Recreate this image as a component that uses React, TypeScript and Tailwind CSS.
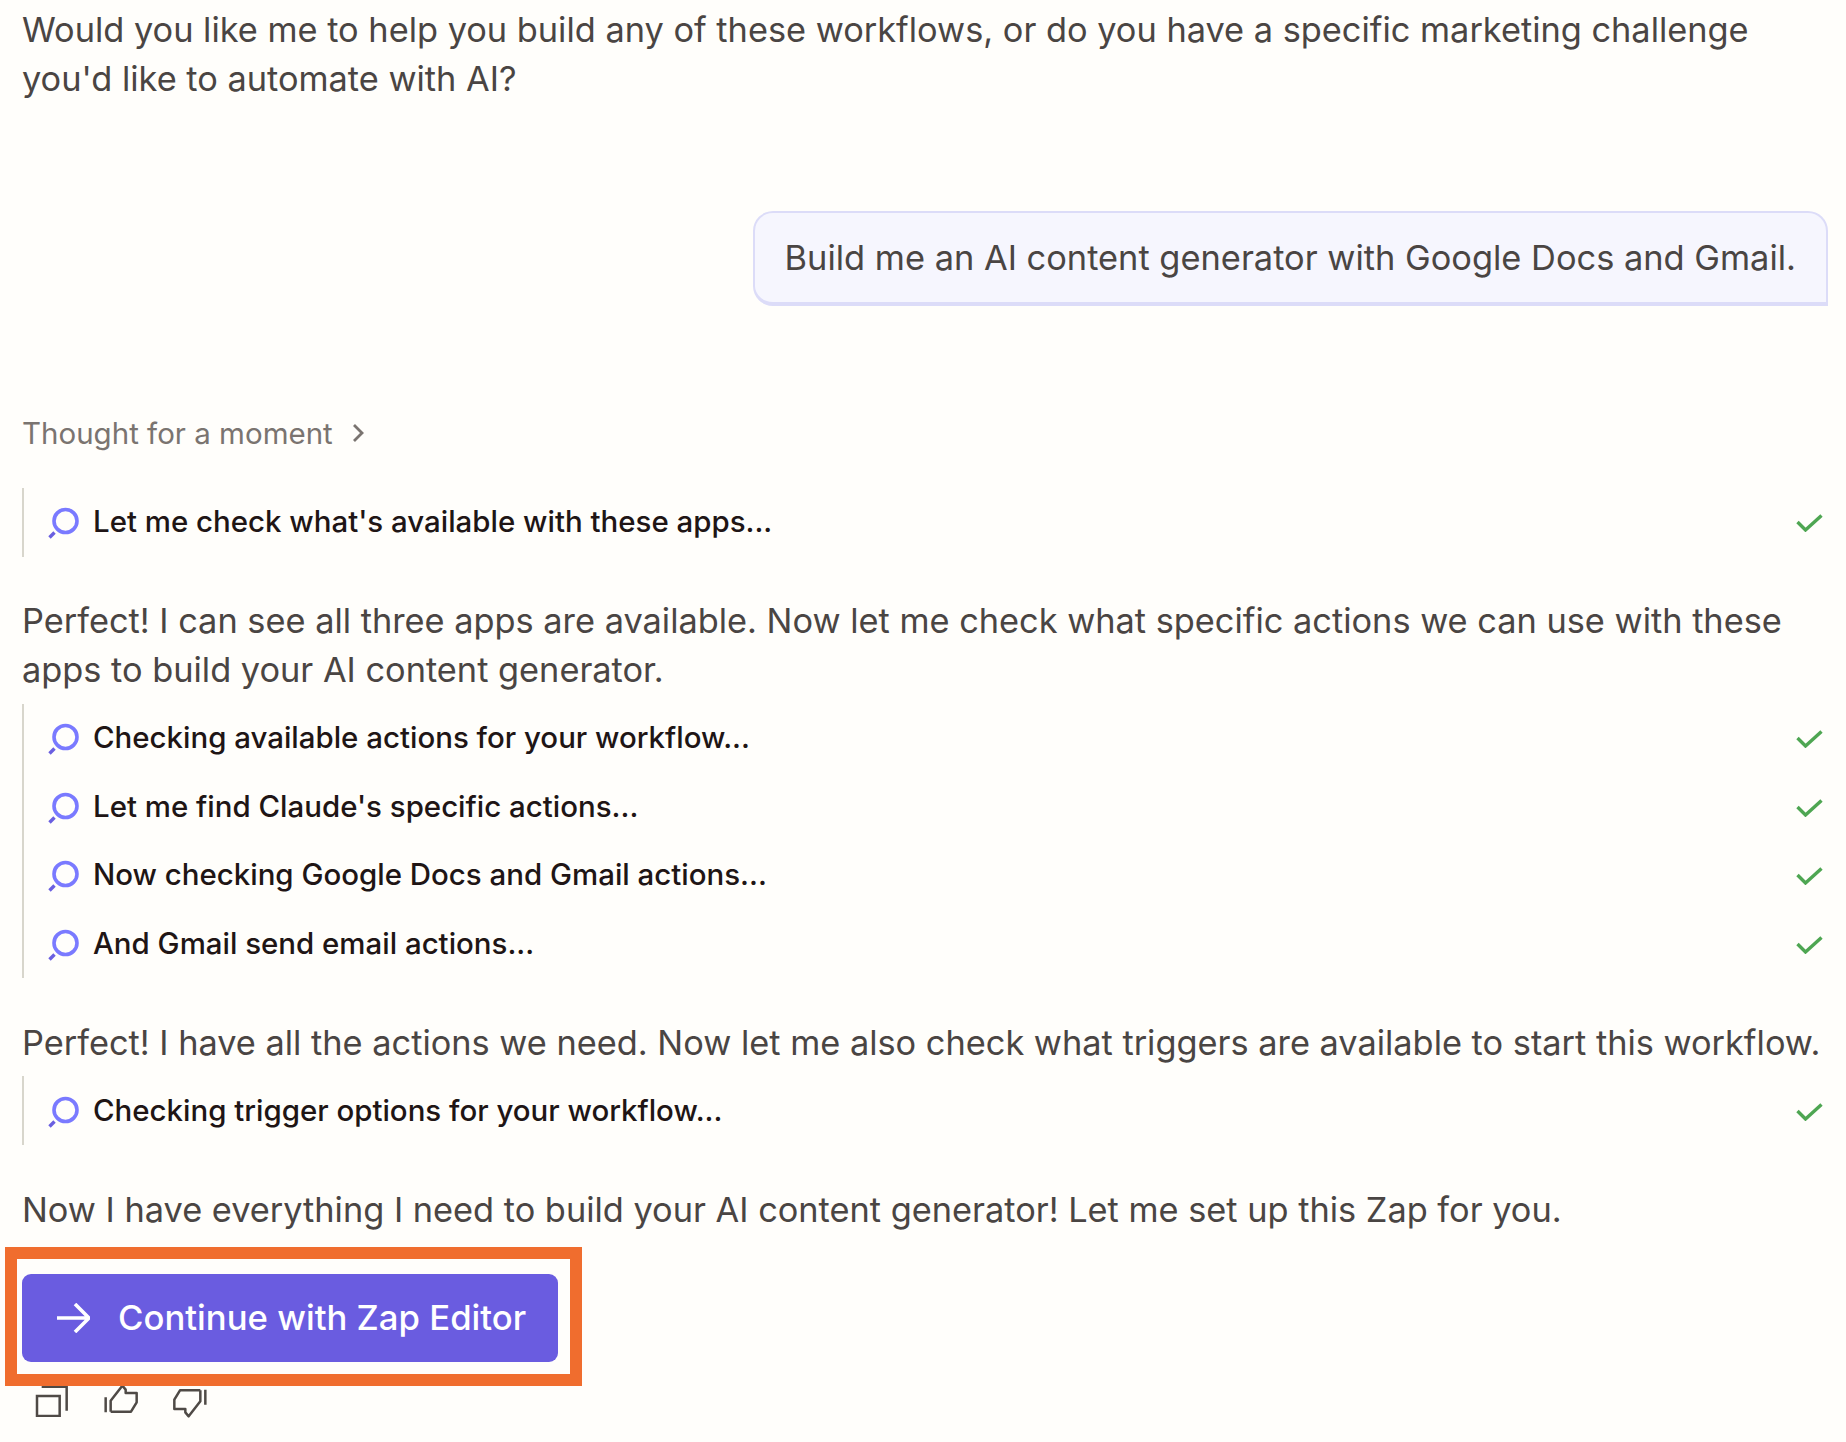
const Search = () => (
  <svg width="32" height="32" viewBox="0 0 32 32" fill="none" className="mt-[2px] shrink-0">
    <circle cx="17.5" cy="14" r="11.5" stroke="#7a7aff" strokeWidth="3.6" />
    <path d="M1.5 30.5l5-5" stroke="#6a5fe0" strokeWidth="3.4" />
  </svg>
);
const Check = () => (
  <svg width="27" height="18" viewBox="0 0 27 18" fill="none" className="mt-[2px] shrink-0">
    <path d="M1.5 8l8 8L25.5 1.5" stroke="#4ea652" strokeWidth="3.4" />
  </svg>
);
const Row = ({ text }: { text: string }) => (
  <div className="flex h-[68.7px] items-center pl-[24px] pr-[5px]">
    <Search />
    <span className="ml-[13px] flex-1 pb-[2px] text-[29.45px] font-medium text-[#201515]">{text}</span>
    <Check />
  </div>
);
const Group = ({ items }: { items: string[] }) => (
  <div className="border-l-2 border-[#d8d6cc]">
    {items.map((t) => (
      <Row key={t} text={t} />
    ))}
  </div>
);
const P = ({ children, className = "" }: { children: React.ReactNode; className?: string }) => (
  <p className={"whitespace-nowrap text-[34.35px] leading-[49px] text-[#4a4543] " + className}>{children}</p>
);
const Thumb = ({ className = "" }: { className?: string }) => (
  <svg width="34" height="32" viewBox="235 15 102 96" fill="none" className={className}>
    <path
      d="M240 55V100M255 98V65L290 20L300 32V42H333V70L316 98H255"
      stroke="#4f4a46"
      strokeWidth="7.5"
      strokeLinejoin="round"
    />
  </svg>
);

export default function App() {
  return (
    <div className="h-[1442px] overflow-hidden bg-[#fffefb] pl-[22px] pr-[18px] pt-[5px] font-['Inter',sans-serif]">
      <P>
        Would you like me to help you build any of these workflows, or do you have a specific marketing challenge
        <br />
        you'd like to automate with AI?
      </P>
      <div className="mt-[108px] flex justify-end">
        <div className="rounded-[20px_20px_0_20px] border-2 border-b-4 border-[#dcdcf8] bg-[#f6f6fe] px-[30px] py-[20px] text-[34.4px] leading-[49px] text-[#4a4543]">
          Build me an AI content generator with Google Docs and Gmail.
        </div>
      </div>
      <div className="mt-[107px] flex h-[40px] items-center text-[29.5px] text-[#7a7470]">
        Thought for a moment
        <svg width="14" height="20" viewBox="0 0 14 20" fill="none" className="ml-[19px]">
          <path d="M2 2l8 8-8 8" stroke="#7a7470" strokeWidth="2.8" />
        </svg>
      </div>
      <div className="mt-[35px]">
        <Group items={["Let me check what's available with these apps..."]} />
      </div>
      <P className="mt-[39px]">
        Perfect! I can see all three apps are available. Now let me check what specific actions we can use with these
        <br />
        apps to build your AI content generator.
      </P>
      <div className="mt-[10px]">
        <Group
          items={[
            "Checking available actions for your workflow...",
            "Let me find Claude's specific actions...",
            "Now checking Google Docs and Gmail actions...",
            "And Gmail send email actions...",
          ]}
        />
      </div>
      <P className="mt-[40px]">
        Perfect! I have all the actions we need. Now let me also check what triggers are available to start this workflow.
      </P>
      <div className="mt-[9px]">
        <Group items={["Checking trigger options for your workflow..."]} />
      </div>
      <P className="mt-[40px]">
        Now I have everything I need to build your AI content generator! Let me set up this Zap for you.
      </P>
      <div className="relative mt-[40px] w-[536px]">
        <button className="flex h-[88px] w-full items-center rounded-[9px] bg-[#6a5ce0] pl-[34px] text-[34.7px] font-medium text-white">
          <svg width="34" height="30" viewBox="0 0 34 30" fill="none" className="mr-[28px] shrink-0">
            <path d="M1 15h32M19 1l14 14-14 14" stroke="#fff" strokeWidth="3.6" />
          </svg>
          <span className="pb-[3px]">Continue with Zap Editor</span>
        </button>
        <div className="absolute -bottom-[24px] -left-[17px] -right-[24px] -top-[27px] border-[12px] border-[#f06d2e]" />
      </div>
      <div className="ml-[13px] mt-[22px] flex items-start">
        <svg width="34" height="33" viewBox="30 12 102 99" fill="none">
          <rect x="36" y="48" width="68" height="60" stroke="#4f4a46" strokeWidth="7.5" />
          <path d="M50 20H125V92" stroke="#4f4a46" strokeWidth="7.5" />
        </svg>
        <Thumb className="ml-[35px]" />
        <Thumb className="ml-[35px] mt-[2px] rotate-180" />
      </div>
    </div>
  );
}
